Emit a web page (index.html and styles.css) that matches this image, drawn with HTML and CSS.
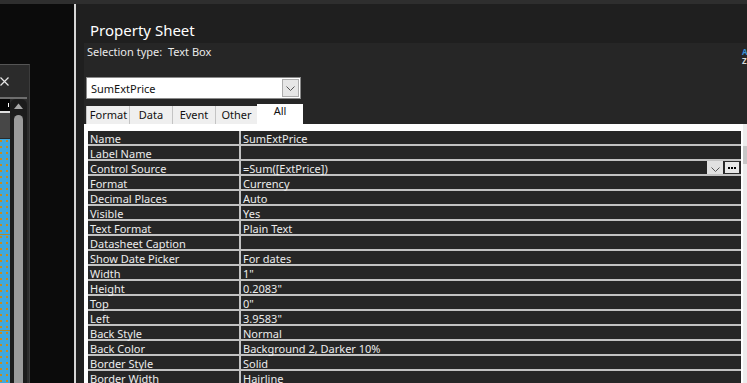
FILE: index.html
```html
<!DOCTYPE html>
<html>
<head>
<meta charset="utf-8">
<link rel="stylesheet" href="styles.css">
</head>
<body>
<div class="topbar"></div>
<div class="main">
  <div class="left">
    <div class="dialog">
      <div class="close">
        <svg width="9" height="9" viewBox="0 0 9 9"><path d="M0.5 0.5 L8.5 8.5 M8.5 0.5 L0.5 8.5" stroke="#e6e6e6" stroke-width="1.2" fill="none"/></svg>
      </div>
      <div class="dlg-sep"></div>
      <div class="dlg-body">
        <div class="form">
          <div class="f-black"><span class="caret"></span></div>
          <div class="f-line"></div>
          <div class="f-grey"></div>
          <div class="f-line2"></div>
          <div class="f-blue">
            <div class="gold g1"></div>
            <div class="gold g2"></div>
          </div>
        </div>
        <div class="vscroll">
          <div class="up"><svg width="9" height="6" viewBox="0 0 9 6"><path d="M0 6 L4.5 0.5 L9 6 Z" fill="#a8a8a8"/></svg></div>
          <div class="thumb"></div>
        </div>
        <div class="dlg-edge"></div>
      </div>
    </div>
  </div>
  <div class="divider"></div>
  <div class="sheet">
    <div class="title">Property Sheet</div>
    <div class="body">
      <div class="seltype">Selection type:&nbsp; Text Box</div>
      <div class="sortz"><span class="a">A</span><span class="z">Z</span></div>
      <div class="combo">
        <span class="combo-text">SumExtPrice</span>
        <span class="combo-btn"><svg width="9" height="5" viewBox="0 0 9 5"><path d="M0.5 0.5 L4.5 4.5 L8.5 0.5" stroke="#555" stroke-width="1" fill="none"/></svg></span>
      </div>
      <div class="tabs">
        <div class="tab t1">Format</div>
        <div class="tab">Data</div>
        <div class="tab">Event</div>
        <div class="tab t4">Other</div>
        <div class="tab active">All</div>
      </div>
      <div class="panel">
        <div class="grid">
          <div class="c">Name</div><div class="c">SumExtPrice</div>
          <div class="c">Label Name</div><div class="c"></div>
          <div class="c">Control Source</div>
          <div class="c cs"><span>=Sum([ExtPrice])</span>
            <span class="cbtns">
              <span class="dd"><svg width="9" height="5" viewBox="0 0 9 5"><path d="M0.5 0.5 L4.5 4.5 L8.5 0.5" stroke="#555" stroke-width="1" fill="none"/></svg></span>
              <span class="dots"><i></i><i></i><i></i></span>
            </span>
          </div>
          <div class="c">Format</div><div class="c">Currency</div>
          <div class="c">Decimal Places</div><div class="c">Auto</div>
          <div class="c">Visible</div><div class="c">Yes</div>
          <div class="c">Text Format</div><div class="c">Plain Text</div>
          <div class="c">Datasheet Caption</div><div class="c"></div>
          <div class="c">Show Date Picker</div><div class="c">For dates</div>
          <div class="c">Width</div><div class="c">1"</div>
          <div class="c">Height</div><div class="c">0.2083"</div>
          <div class="c">Top</div><div class="c">0"</div>
          <div class="c">Left</div><div class="c">3.9583"</div>
          <div class="c">Back Style</div><div class="c">Normal</div>
          <div class="c">Back Color</div><div class="c">Background 2, Darker 10%</div>
          <div class="c">Border Style</div><div class="c">Solid</div>
          <div class="c">Border Width</div><div class="c">Hairline</div>
        </div>
        <div class="rscroll"><div class="rthumb"></div></div>
      </div>
    </div>
  </div>
</div>
</body>
</html>
```
FILE: styles.css
```css
* { box-sizing: border-box; }
html, body { margin: 0; padding: 0; }
body {
  width: 747px;
  height: 383px;
  overflow: hidden;
  background: #0b0b0b;
  font-family: "Segoe UI", "Noto Sans", "Open Sans", sans-serif;
  font-size: 11px;
  color: #e8e8e8;
}
.topbar { height: 4px; background: #2e2e2e; }
.main { display: flex; height: 379px; overflow: hidden; }

.left { width: 74px; flex-shrink: 0; background: #0b0b0b; }
.dialog {
  margin-top: 60px;
  width: 30px;
  height: 319px;
  background: #2b2b2b;
  border-top: 1px solid #555;
  border-right: 1px solid #3c3c3c;
  display: flex;
  flex-direction: column;
}
.close { height: 32px; padding: 12px 0 0 0; flex-shrink: 0; }
.close svg { display: block; }
.dlg-sep { height: 2px; background: #6e6e6e; width: 27px; flex-shrink: 0; }
.dlg-body { flex: 1; display: flex; min-height: 0; }
.form { width: 10px; display: flex; flex-direction: column; }
.f-black { height: 12px; background: #050505; position: relative; flex-shrink: 0; }
.caret { position: absolute; left: 8px; top: 4px; width: 1px; height: 4px; background: #fff; }
.f-line { height: 2px; background: #e0e0e0; flex-shrink: 0; }
.f-grey { height: 25px; background: #474747; flex-shrink: 0; }
.f-line2 { height: 1px; background: #2a2a2a; flex-shrink: 0; }
.f-blue {
  flex: 1;
  background-color: #3fa8de;
  background-image: radial-gradient(circle, #c98a1c 0.9px, transparent 1.1px);
  background-size: 6px 6px;
  background-position: -2px -1px;
  position: relative;
}
.gold { position: absolute; left: 0; right: 0; height: 1px; background: #b08a2a; }
.g1 { top: 95px; }
.g2 { top: 191px; }
.vscroll {
  width: 17px;
  background: #1c1c1c;
  border-radius: 6px 6px 0 0;
  display: flex;
  flex-direction: column;
  align-items: center;
  padding-top: 4px;
}
.up { height: 10px; flex-shrink: 0; }
.up svg { display: block; }
.thumb { flex: 1; width: 9px; background: #9b9b9b; border-radius: 5px 5px 0 0; margin-top: 2px; }
.dlg-edge { flex: 1; background: #2b2b2b; }

.divider { width: 2px; flex-shrink: 0; background: #d6d6d6; }
.sheet { flex: 1; background: #1f1f1f; display: flex; flex-direction: column; min-width: 0; overflow: hidden; }
.title {
  flex-shrink: 0;
  height: 39px;
  padding: 16px 0 0 14px;
  font-size: 15px;
  line-height: 20px;
  color: #ffffff;
}
.body {
  flex: 1;
  min-height: 0;
  margin-left: 8px;
  background: #262626;
  position: relative;
  display: flex;
  flex-direction: column;
}
.seltype { flex-shrink: 0; padding: 1px 0 0 3px; line-height: 15px; height: 34px; color: #eaeaea; }
.sortz {
  position: absolute;
  right: -1px;
  top: 4px;
  width: 6px;
  display: flex;
  flex-direction: column;
  font-size: 8px;
  line-height: 9px;
  font-weight: bold;
}
.sortz .a { color: #3a8fd6; }
.sortz .z { color: #d8d8d8; }

.combo {
  flex-shrink: 0;
  margin-left: 2px;
  width: 215px;
  height: 22px;
  background: #ffffff;
  border: 1px solid #8a8a8a;
  display: flex;
  align-items: center;
  justify-content: space-between;
  padding: 0 1px 0 4px;
  color: #111;
}
.combo-btn {
  width: 17px;
  height: 18px;
  background: #e6e6e6;
  border: 1px solid #acacac;
  display: flex;
  align-items: center;
  justify-content: center;
}
.combo-btn svg { display: block; }

.tabs { flex-shrink: 0; display: flex; align-items: flex-end; margin: 5px 0 0 2px; height: 20px; }
.tab {
  height: 18px;
  width: 43px;
  background: #efefef;
  border-left: 1px solid #c4c4c4;
  color: #111;
  padding-top: 2px;
  line-height: 14px;
  text-align: center;
}
.tab.t1 { width: 43px; padding-left: 1px; }
.tab.t4 { width: 42px; }
.tab.active {
  height: 20px;
  width: 46px;
  background: #ffffff;
  border-left: none;
  padding-top: 0;
}

.panel {
  flex: 1;
  min-height: 0;
  background: #ffffff;
  display: flex;
  padding: 7px 0 0 4px;
}
.grid {
  width: 653px;
  display: grid;
  grid-template-columns: 151px 1fr;
  grid-auto-rows: 13px;
  gap: 2px;
  background: #c2c2c2;
  align-content: start;
}
.c {
  background: #262626;
  color: #ececec;
  padding: 0 0 0 2px;
  line-height: 15px;
  white-space: nowrap;
}
.cs { display: flex; justify-content: space-between; padding: 0 1px 0 2px; }
.cbtns { display: flex; gap: 1px; height: 13px; }
.dd {
  width: 16px;
  height: 13px;
  background: #e1e1e1;
  display: flex;
  align-items: center;
  justify-content: center;
  padding-top: 3px;
}
.dd svg { display: block; }
.dots {
  width: 16px;
  height: 13px;
  background: #e6e6e6;
  border: 1px solid #2a2a2a;
  display: flex;
  justify-content: center;
  align-items: center;
  gap: 1px;
  padding-top: 1px;
}
.dots i { display: block; width: 2px; height: 2px; background: #000; }
.rscroll {
  margin-left: 2px;
  width: 4px;
  background: #ececec;
  margin-top: -7px;
  padding-top: 22px;
}
.rthumb { height: 18px; background: #c6c6c6; }
```
